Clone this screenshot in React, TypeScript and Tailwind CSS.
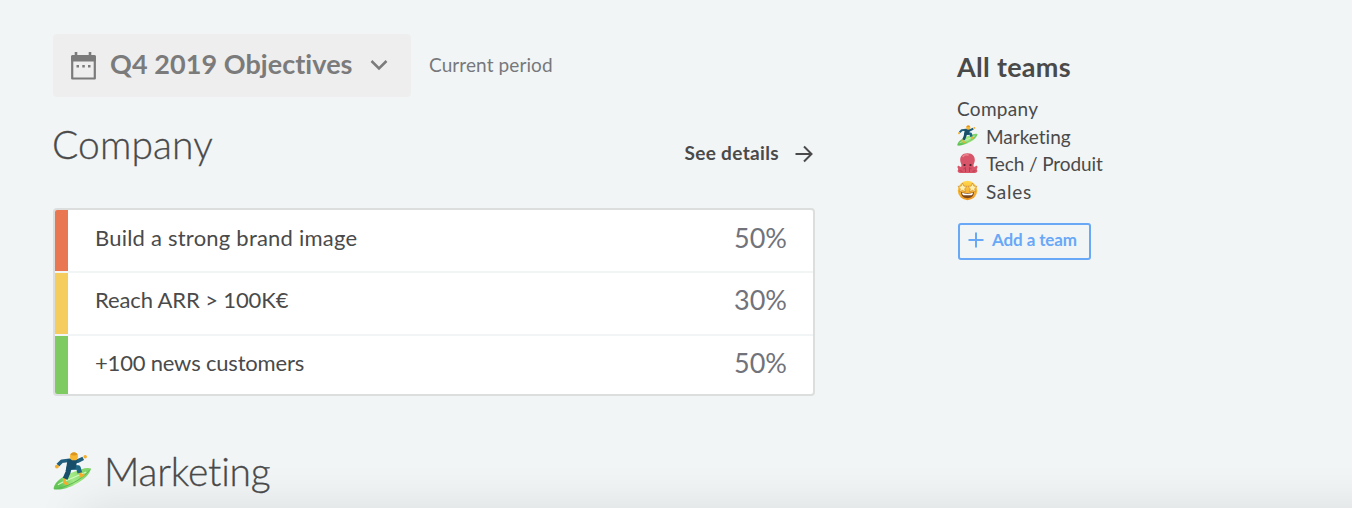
import type { ReactNode } from 'react';

const objectives = [
  { title: 'Build a strong brand image', progress: '50%', color: 'bg-[#e97852]', spacing: 'tracking-[0.22px]' },
  { title: 'Reach ARR > 100K€', progress: '30%', color: 'bg-[#f5cd5f]', spacing: 'tracking-[-0.12px]' },
  { title: '+100 news customers', progress: '50%', color: 'bg-[#7ecb62]', spacing: 'tracking-[-0.19px]' },
];

function Surfer({ className }: { className: string }) {
  return (
    <svg className={className} viewBox="0 0 40 40" fill="none">
      <defs>
        <linearGradient id="board" x1="6" y1="34" x2="34" y2="22" gradientUnits="userSpaceOnUse">
          <stop stopColor="#62c556" />
          <stop offset="0.5" stopColor="#a5eb87" />
          <stop offset="1" stopColor="#7fd56a" />
        </linearGradient>
      </defs>
      <path d="M.5 38C2 30 12 24 21 21c7-2.500 14-5.500 18-3.500C38 23 32 29 23 33.500 15 38 4 40.500.5 38Z" fill="url(#board)" />
      <path d="M1 38.500C13 37 29 30 38 18.500" stroke="#5eb855" strokeWidth="1" />
      <path d="M5 34c9-5 19-8 29-13" stroke="#d5f8c2" strokeWidth="1.200" />
      <path d="m11.500 28 .5 4 2.500 1M27.500 22l1.500 3 2-1" stroke="#f5ae2c" strokeWidth="2.800" strokeLinecap="round" />
      <path d="m17 15-1.500 6-3 7" stroke="#174f6b" strokeWidth="5.200" strokeLinejoin="round" />
      <path d="m17 16 9 .5 1.500 5.500" stroke="#1d6885" strokeWidth="4.800" strokeLinejoin="round" />
      <path d="m5 14 4-4 8-1 8 1 6-3" stroke="#205f7d" strokeWidth="3.800" strokeLinejoin="round" />
      <path d="m15 8 10 1-2 9-10 2Z" fill="#174f6b" />
      <circle cx="4" cy="15.500" r="2" fill="#f5ae2c" />
      <circle cx="33" cy="5.500" r="1.800" fill="#f5ae2c" />
      <circle cx="21.500" cy="5" r="4.100" fill="#f7b733" />
      <path d="M17.800 3.500c1-3.500 6.500-3.500 7.400 0l-4 .5Z" fill="#dc951d" />
    </svg>
  );
}

function Octopus() {
  return (
    <svg className="h-[21px] w-[21px]" viewBox="0 0 21 21" fill="none">
      <path d="M10.500.3C5 .3 3.200 3.700 3.200 7.200c0 2.300 1.500 3.800 1.300 5.500-.2 2-1.300 1-2.300.2-1.500-.8-2 1-1.500 2 .5 1 .8 1 .3 1.800C0 18.500 1.200 20 4 20h13c2.800 0 4-1.500 3-3.300-.5-.8-.2-.8.3-1.800.5-1 0-2.800-1.500-2-1 .8-2.100 1.800-2.300-.2-.2-1.700 1.300-3.200 1.300-5.500C17.800 3.700 16 .3 10.500.3Z" fill="#d85468" />
      <path d="M6 3.500c1-1.500 3-2 5-1.500" stroke="#ed8790" strokeWidth="1.500" strokeLinecap="round" />
      <path d="m6.500 16 2-1.500V19M14.500 16l-2-1.500V19M2.500 17.500l3 1M18.500 17.500l-3 1" stroke="#b53a50" strokeWidth=".9" />
      <circle cx="7.500" cy="12" r="1.100" fill="#402029" />
      <circle cx="13.500" cy="12" r="1.100" fill="#402029" />
    </svg>
  );
}

function StarStruck() {
  return (
    <svg className="h-[21px] w-[21px]" viewBox="0 0 21 21" fill="none">
      <defs>
        <linearGradient id="face" x1="10" y1="1" x2="10" y2="20" gradientUnits="userSpaceOnUse">
          <stop stopColor="#ffd84e" />
          <stop offset="1" stopColor="#ef971e" />
        </linearGradient>
      </defs>
      <circle cx="10.500" cy="10.500" r="9.700" fill="url(#face)" />
      <path d="m5.500 3 1.400 3.100 3.200.3-2.400 2.300.7 3.300-2.900-1.700L2.600 12l.7-3.300L.9 6.400l3.200-.3ZM15.500 3l1.400 3.100 3.200.3-2.400 2.300.7 3.300-2.900-1.700-2.900 1.700.7-3.300-2.400-2.300 3.200-.3Z" fill="#fff0ae" stroke="#c77b20" strokeWidth=".6" />
      <path d="M4 12c3.500 1.300 9.500 1.300 13 0 0 3.800-2.500 6.200-6.500 6.200S4 15.800 4 12Z" fill="#7c4619" />
      <path d="M5 12.800c3.500 1.200 7.500 1.200 11 0-.3 1.700-.8 2.400-1.500 2.400h-8c-.7 0-1.300-.7-1.500-2.400Z" fill="#fff" />
    </svg>
  );
}

function Team({ icon, className, children }: { icon?: ReactNode; className: string; children: ReactNode }) {
  return (
    <li className="flex h-[27.700px] items-center gap-[8px]">
      {icon}
      <span className={`pt-[2px] ${className}`}>{children}</span>
    </li>
  );
}

export default function App() {
  return (
    <div className="relative h-[508px] w-[1352px] overflow-hidden bg-[#f1f5f6] font-['Lato',sans-serif] text-[#4a4a4a] [font-variant-ligatures:none]">
      <div className="flex h-[508px] pl-[53px]">
        <main className="w-[762px] pt-[34px]">
          <div className="flex items-center">
            <button className="flex h-[63px] w-[358px] items-center rounded-[4px] bg-[#eeeeee] pl-[17px] text-[#7b7b7b]">
              <svg className="mt-[2px] h-[29px] w-[27px]" viewBox="0 0 27 29" fill="none">
                <path d="M6 0v4M20 0v4" stroke="currentColor" strokeWidth="2.600" />
                <path d="M2.200 4.500h22.600v22H2.200Z" stroke="currentColor" strokeWidth="2.200" strokeLinejoin="round" />
                <rect x="1.100" y="3" width="24.800" height="6.500" rx="1.500" fill="currentColor" />
                <path d="M6.500 13h2.500v2.500H6.500ZM12.300 13h2.500v2.500h-2.500ZM18 13h2.500v2.500H18Z" fill="currentColor" />
              </svg>
              <span className="mb-[4px] ml-[13px] w-[243px] text-left text-[27px] leading-[32px] font-bold tracking-[0.060px] whitespace-nowrap">Q4 2019 Objectives</span>
              <svg className="mb-[2px] ml-[17px] h-[12px] w-[18px]" viewBox="0 0 18 12" fill="none">
                <path d="m1.500 2 7.500 7.500L16.500 2" stroke="currentColor" strokeWidth="2.500" />
              </svg>
            </button>
            <span className="mb-[2px] ml-[18px] text-[19px] leading-[24px] tracking-[0.1px] text-[#77787b]">Current period</span>
          </div>

          <div className="flex h-[111px] justify-between">
            <h1 className="ml-[-1px] pt-[23px] text-[39px] leading-[48px] font-light tracking-[0.1px] [-webkit-text-stroke:0.3px]">Company</h1>
            <a className="mt-[44px] mr-[2px] flex h-[24px] items-center text-[19px] font-bold tracking-[0.35px]" href="#details">
              See details
              <svg className="mt-[2px] ml-[16px] h-[18px] w-[18px]" viewBox="0 0 18 18" fill="none">
                <path d="M.5 9h16M9 1.500 16.500 9 9 16.500" stroke="currentColor" strokeWidth="2" />
              </svg>
            </a>
          </div>

          <section className="h-[188px] overflow-hidden rounded-[4px] border-2 border-[#dcdddd] bg-white">
            {objectives.map((objective) => (
              <div key={objective.title} className="flex h-[63px] border-b-2 border-[#f1f5f6] first:h-[62.500px] last:h-[60px] last:border-b-0">
                <div className={`w-[13px] ${objective.color}`} />
                <div className="flex h-[54px] flex-1 items-center justify-between pr-[26px] pl-[27px]">
                  <span className={`text-[22px] ${objective.spacing}`}>{objective.title}</span>
                  <span className="pt-[2px] text-[27px] text-[#72737a]">{objective.progress}</span>
                </div>
              </div>
            ))}
          </section>

          <h2 className="mt-[51px] flex h-[48px] items-center text-[39px] font-light">
            <Surfer className="h-[40px] w-[39px]" />
            <span className="ml-[12px] tracking-[-0.2px] [-webkit-text-stroke:0.3px]">Marketing</span>
          </h2>
        </main>

        <aside className="ml-[142px] pt-[51px]">
          <h3 className="text-[27px] leading-[32px] font-bold tracking-[0.3px]">All teams</h3>
          <ul className="mt-[11px] text-[19px] leading-[24px]">
            <Team className="tracking-[0.3px]">Company</Team>
            <Team className="tracking-[0px]" icon={<Surfer className="h-[21px] w-[21px]" />}>Marketing</Team>
            <Team className="tracking-[-0.1px]" icon={<Octopus />}>Tech / Produit</Team>
            <Team className="tracking-[0.7px]" icon={<StarStruck />}>Sales</Team>
          </ul>
          <button className="mt-[18px] ml-[1px] flex h-[37px] w-[133px] items-center rounded-[3px] border-2 border-[#68a8f7] pl-[8px] text-[#68a8f7]">
            <svg className="mb-[2px] h-[16px] w-[16px]" viewBox="0 0 16 16" fill="none">
              <path d="M8 .5v15M.5 8h15" stroke="currentColor" strokeWidth="2" />
            </svg>
            <span className="mb-[4px] ml-[8px] text-[17px] font-bold tracking-[-0.1px] whitespace-nowrap">Add a team</span>
          </button>
        </aside>
      </div>
      {/* shadow of the sheet below the fold */}
      <div className="pointer-events-none absolute top-[512px] right-[-60px] left-[80px] h-[40px] shadow-[0_0_50px_rgba(0,0,0,0.12)]" />
    </div>
  );
}
